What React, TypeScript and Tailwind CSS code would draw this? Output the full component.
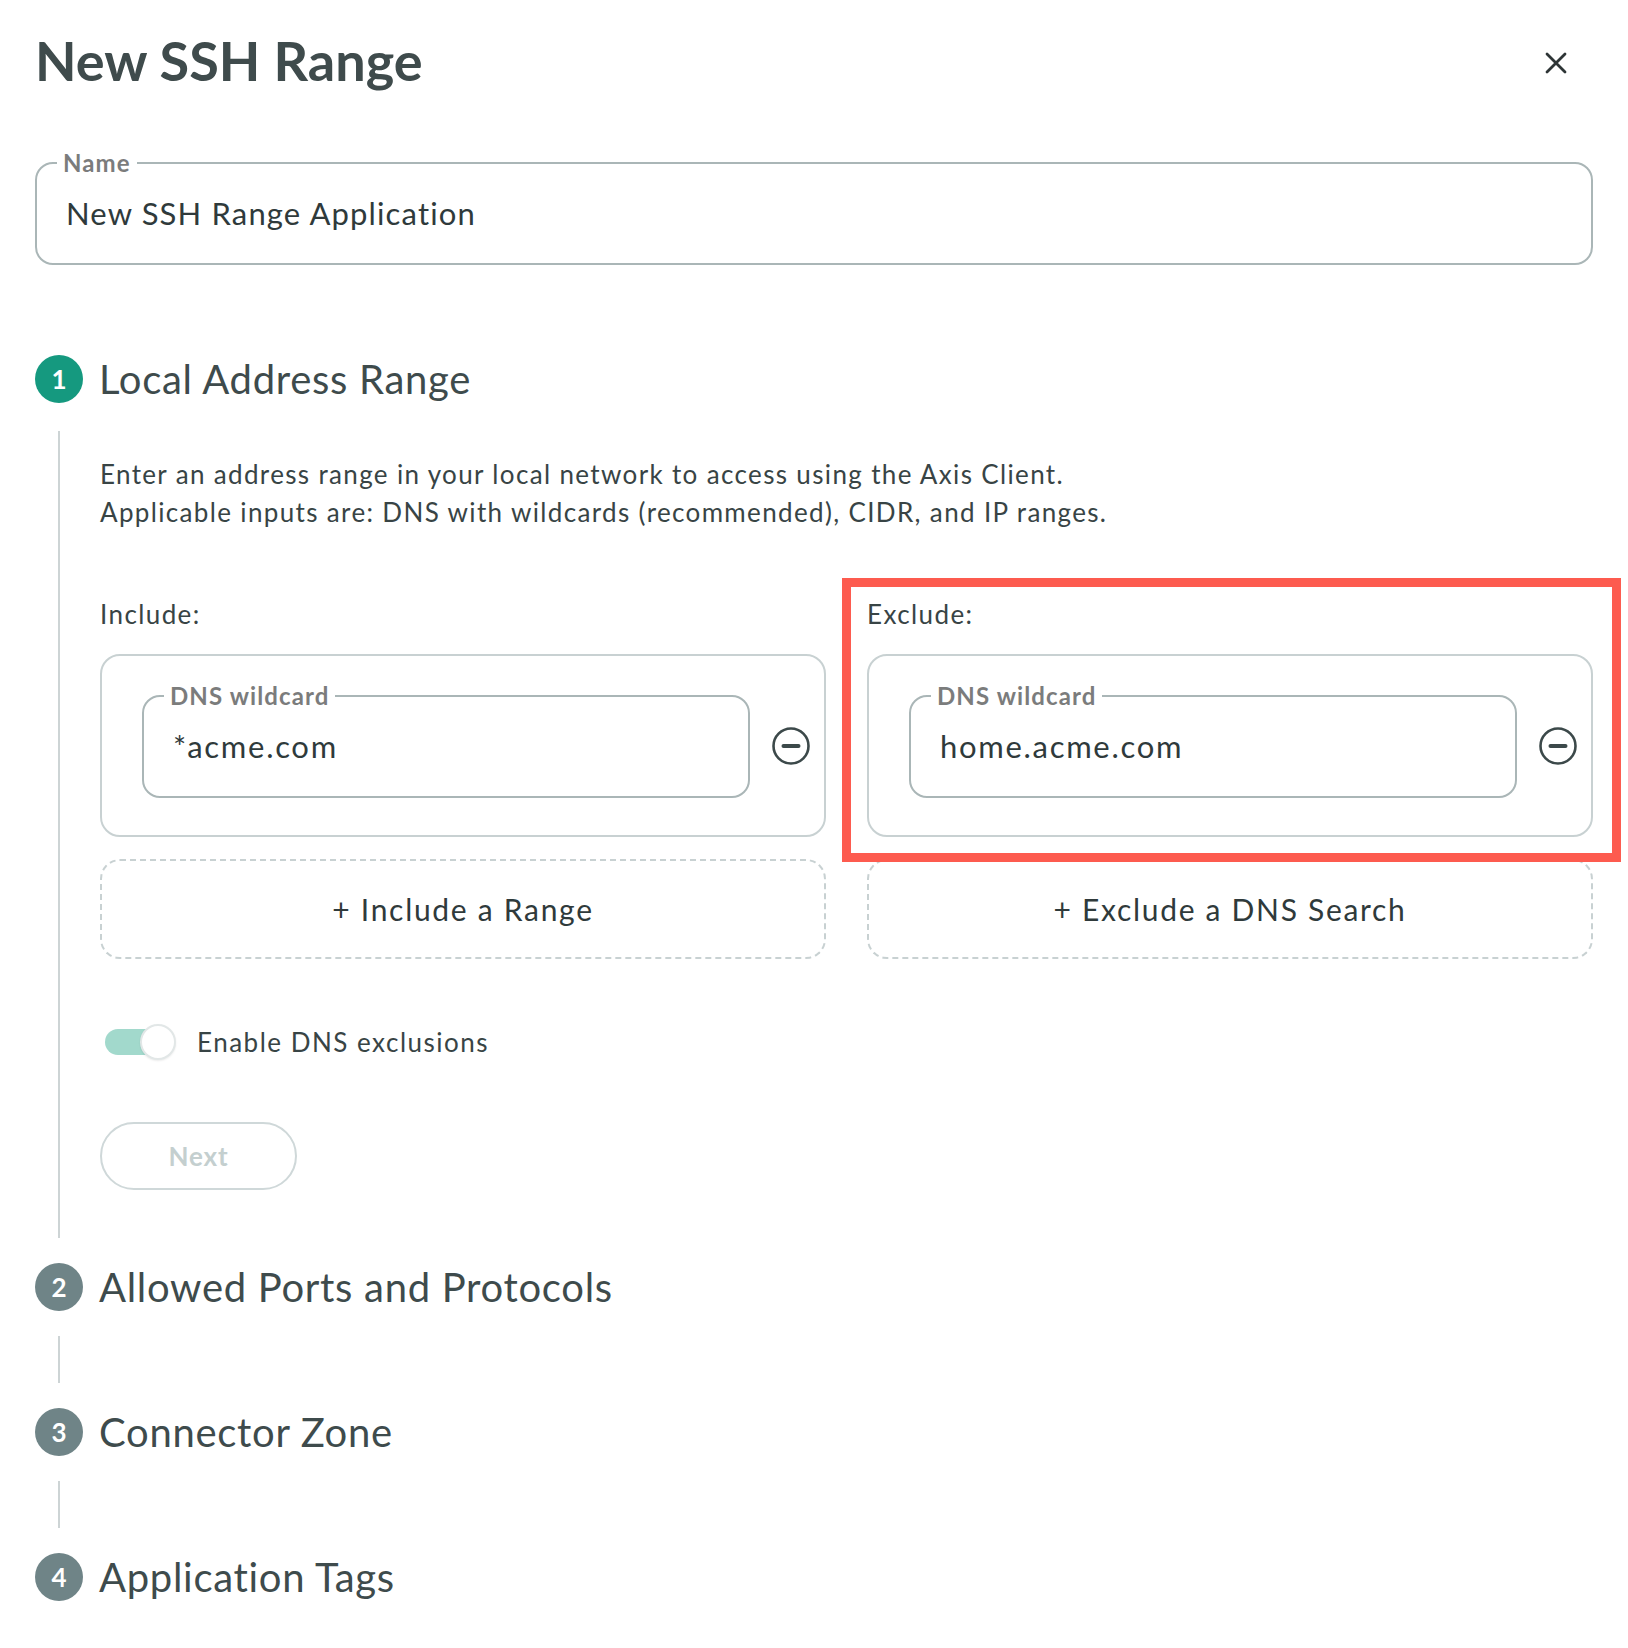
import React from "react";

function OutlineField({
  label,
  value,
  className = "",
  valueClass = "tracking-[1.7px]",
}: {
  label: string;
  value: string;
  className?: string;
  valueClass?: string;
}) {
  return (
    <fieldset className={`m-0 min-w-0 rounded-[18px] border-2 border-[#aab6b7] pl-[29px] pr-[20px] pt-[16px] pb-[30px] ${className}`}>
      <legend className="-ml-[9px] px-[6px] text-[24px] font-bold leading-[28px] tracking-[1.1px] text-[#7b7c7c]">{label}</legend>
      <div className={`text-[31px] leading-[40px] text-[#2f3a3b] ${valueClass}`}>{value}</div>
    </fieldset>
  );
}

function MinusCircle() {
  return (
    <svg width="40" height="40" viewBox="0 0 40 40" className="shrink-0">
      <circle cx="20" cy="20" r="17.5" fill="none" stroke="#3c494a" strokeWidth="2.6" />
      <line x1="12.5" y1="20" x2="27.5" y2="20" stroke="#3c494a" strokeWidth="4" strokeLinecap="round" />
    </svg>
  );
}

function StepHead({ n, title, active = false }: { n: number; title: string; active?: boolean }) {
  return (
    <div className="flex items-center">
      <div
        className={`flex h-12 w-12 shrink-0 items-center justify-center rounded-full text-[26px] font-bold leading-none text-white ${
          active ? "bg-[#15997f]" : "bg-[#6f8487]"
        }`}
      >
        {n}
      </div>
      <div className="ml-[16px] text-[40px] leading-[48px] tracking-[0.7px] text-[#3e4b4c]">{title}</div>
    </div>
  );
}

function RangeCard({ value }: { value: string }) {
  return (
    <div className="flex items-center rounded-[20px] border-2 border-[#c8d1d2] pl-[40px] pr-[13px] pt-[26px] pb-[37px]">
      <OutlineField label="DNS wildcard" value={value} className="flex-1" />
      <div className="ml-[21px] mt-[12px]">
        <MinusCircle />
      </div>
    </div>
  );
}

function AddBox({ text }: { text: string }) {
  return (
    <div className="flex h-[100px] items-center justify-center rounded-[20px] border-2 border-dashed border-[#c8d1d2] text-[30px] tracking-[1.7px] text-[#2f3a3b]">
      {text}
    </div>
  );
}

export default function App() {
  return (
    <div className="min-h-[1648px] w-full bg-white px-[35px] text-[#2f3a3b]" style={{ fontFamily: "Lato, 'Noto Sans', sans-serif" }}>
      {/* Header */}
      <div className="flex items-center justify-between pt-[34px]">
        <h1 className="text-[54px] font-bold leading-[54px] text-[#3f4b4c]">New SSH Range</h1>
        <svg width="24" height="24" viewBox="0 0 24 24" className="mr-[25px] mt-[4px]">
          <path d="M3 3 L21 21 M21 3 L3 21" stroke="#2e3536" strokeWidth="2.8" strokeLinecap="round" />
        </svg>
      </div>

      <OutlineField label="Name" value="New SSH Range Application" className="mt-[61px]" valueClass="tracking-[1.15px]" />

      {/* Step 1 */}
      <div className="mt-[90px]">
        <StepHead n={1} title="Local Address Range" active />
        <div className="mb-[25px] ml-[23px] mt-[28px] border-l-2 border-[#cdd4d5] pb-[48px] pl-[40px] pt-[24px]">
          <p className="text-[26px] leading-[38px] tracking-[1.35px] text-[#384445]">
            Enter an address range in your local network to access using the Axis Client.
            <br />
            Applicable inputs are: DNS with wildcards (recommended), CIDR, and IP ranges.
          </p>

          <div className="mt-[64px] grid grid-cols-2 gap-x-[41px]">
            <div>
              <div className="text-[26px] leading-[38px] tracking-[1.4px] text-[#384445]">Include:</div>
              <div className="mt-[21px]">
                <RangeCard value="*acme.com" />
              </div>
            </div>
            <div className="relative">
              <div className="text-[26px] leading-[38px] tracking-[1.4px] text-[#384445]">Exclude:</div>
              <div className="mt-[21px]">
                <RangeCard value="home.acme.com" />
              </div>
              <div className="pointer-events-none absolute -bottom-[25px] -left-[25px] -right-[28px] -top-[17px] border-[9px] border-[#fd5b4f]" />
            </div>
            <div className="mt-[22px]">
              <AddBox text="+ Include a Range" />
            </div>
            <div className="mt-[22px]">
              <AddBox text="+ Exclude a DNS Search" />
            </div>
          </div>

          {/* Toggle */}
          <div className="mt-[63px] flex h-[40px] items-center">
            <div className="relative ml-[5px] h-[26px] w-[68px]">
              <div className="h-[26px] w-[60px] rounded-full bg-[#a2d9cc]" />
              <div className="absolute right-[-3px] top-[-5px] h-[36px] w-[36px] rounded-full border-2 border-[#e2e7e7] bg-white shadow-[0_1px_2px_rgba(0,0,0,0.08)]" />
            </div>
            <span className="ml-[24px] text-[26px] tracking-[1.5px] text-[#384445]">Enable DNS exclusions</span>
          </div>

          {/* Next */}
          <button className="mt-[60px] flex h-[68px] w-[197px] items-center justify-center rounded-full border-2 border-[#cfd8d9] text-[26px] font-bold tracking-[0.8px] text-[#c4cfcf]">
            Next
          </button>
        </div>
      </div>

      <StepHead n={2} title="Allowed Ports and Protocols" />
      <div className="ml-[23px] my-[25px] h-[47px] border-l-2 border-[#cdd4d5]" />
      <StepHead n={3} title="Connector Zone" />
      <div className="ml-[23px] my-[25px] h-[47px] border-l-2 border-[#cdd4d5]" />
      <StepHead n={4} title="Application Tags" />
    </div>
  );
}
